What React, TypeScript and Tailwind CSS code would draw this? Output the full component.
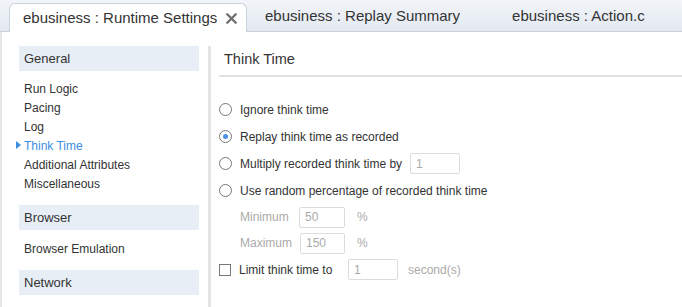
import { X } from 'lucide-react';

const navGeneral = ['Run Logic', 'Pacing', 'Log', 'Think Time', 'Additional Attributes', 'Miscellaneous'];

function Radio({ checked }: { checked?: boolean }) {
  return (
    <span className="w-[13px] h-[13px] rounded-full border border-[#777] bg-white flex items-center justify-center shrink-0">
      {checked && <span className="w-[5px] h-[5px] rounded-full bg-[#4a90e2]" />}
    </span>
  );
}

function Field({ value, className }: { value: string; className: string }) {
  return (
    <div className={`h-[21px] border border-[#dcdcdc] rounded-[2px] bg-white px-[5px] flex items-center text-[12px] text-[#aaa] ${className}`}>
      {value}
    </div>
  );
}

export default function App() {
  return (
    <div className="w-[682px] h-[307px] bg-white overflow-hidden text-[#333]" style={{ fontFamily: '"Liberation Sans", Arial, sans-serif' }}>
      {/* tabs */}
      <div className="h-[32px] bg-gradient-to-b from-[#f2f5f9] to-[#e3e9f1] border-b border-[#c8ced6] flex items-end">
        <div className="ml-[9px] w-[238px] h-[29px] bg-white border border-[#ccd2da] border-b-0 rounded-t-[6px] -mb-px flex items-center pl-[13px] gap-[6px] text-[15px]">
          <span>ebusiness : Runtime Settings</span>
          <X className="w-[17px] h-[17px] text-[#6f6f6f]" strokeWidth={3.4} />
        </div>
        <div className="h-[29px] flex items-center pl-[18px] text-[15px]">ebusiness : Replay Summary</div>
        <div className="h-[29px] flex items-center pl-[52px] text-[15px]">ebusiness : Action.c</div>
      </div>

      <div className="flex h-[275px] border-l-2 border-[#e6e6e6]">
        {/* sidebar */}
        <div className="w-[206px] pl-[17px] pr-[9px] pt-[14px] shrink-0">
          <div className="h-[25px] bg-[#e8eef6] pl-[5px] flex items-center text-[13px]">General</div>
          <div className="pt-[8px] flex flex-col">
            {navGeneral.map((item) => (
              <div key={item} className={`h-[19px] pl-[5px] flex items-center text-[12px] relative ${item === 'Think Time' ? 'text-[#3b8ee0]' : ''}`}>
                {item === 'Think Time' && (
                  <span className="absolute left-[-3px] top-[5px] w-0 h-0 border-y-[4.5px] border-y-transparent border-l-[5px] border-l-[#3b8ee0]" />
                )}
                {item}
              </div>
            ))}
          </div>
          <div className="mt-[12px] h-[25px] bg-[#e8eef6] pl-[5px] flex items-center text-[13px]">Browser</div>
          <div className="h-[40px] pl-[5px] pb-[3px] flex items-center text-[12px]">Browser Emulation</div>
          <div className="h-[25px] bg-[#e8eef6] pl-[5px] flex items-center text-[13px]">Network</div>
        </div>

        {/* divider */}
        <div className="w-[3px] mt-[14px] bg-[#e3e3e3] shrink-0" />

        {/* content */}
        <div className="flex-1 pl-[8px] pt-[14px]">
          <div className="h-[31px] border-b-2 border-[#e0e0e0] pl-[5px] flex items-center text-[14.5px] pb-[2px]">Think Time</div>
          <div className="pt-[19px] flex flex-col text-[12px]">
            <div className="h-[27px] flex items-center gap-[8px]">
              <Radio />
              <span>Ignore think time</span>
            </div>
            <div className="h-[27px] flex items-center gap-[8px]">
              <Radio checked />
              <span>Replay think time as recorded</span>
            </div>
            <div className="h-[27px] flex items-center gap-[8px]">
              <Radio />
              <span>Multiply recorded think time by</span>
              <Field value="1" className="w-[50px]" />
            </div>
            <div className="h-[27px] flex items-center gap-[8px]">
              <Radio />
              <span>Use random percentage of recorded think time</span>
            </div>
            <div className="h-[26px] flex items-center pl-[21px] text-[#aaa]">
              <span className="w-[59px]">Minimum</span>
              <Field value="50" className="w-[46px]" />
              <span className="ml-[12px]">%</span>
            </div>
            <div className="h-[26px] flex items-center pl-[21px] text-[#aaa]">
              <span className="w-[60px]">Maximum</span>
              <Field value="150" className="w-[45px]" />
              <span className="ml-[12px]">%</span>
            </div>
            <div className="h-[27px] flex items-center">
              <span className="w-[12px] h-[12px] border border-[#777] bg-white shrink-0" />
              <span className="ml-[8px] w-[109px]">Limit think time to</span>
              <Field value="1" className="w-[50px]" />
              <span className="ml-[10px] text-[#aaa]">second(s)</span>
            </div>
          </div>
        </div>
      </div>
    </div>
  );
}
